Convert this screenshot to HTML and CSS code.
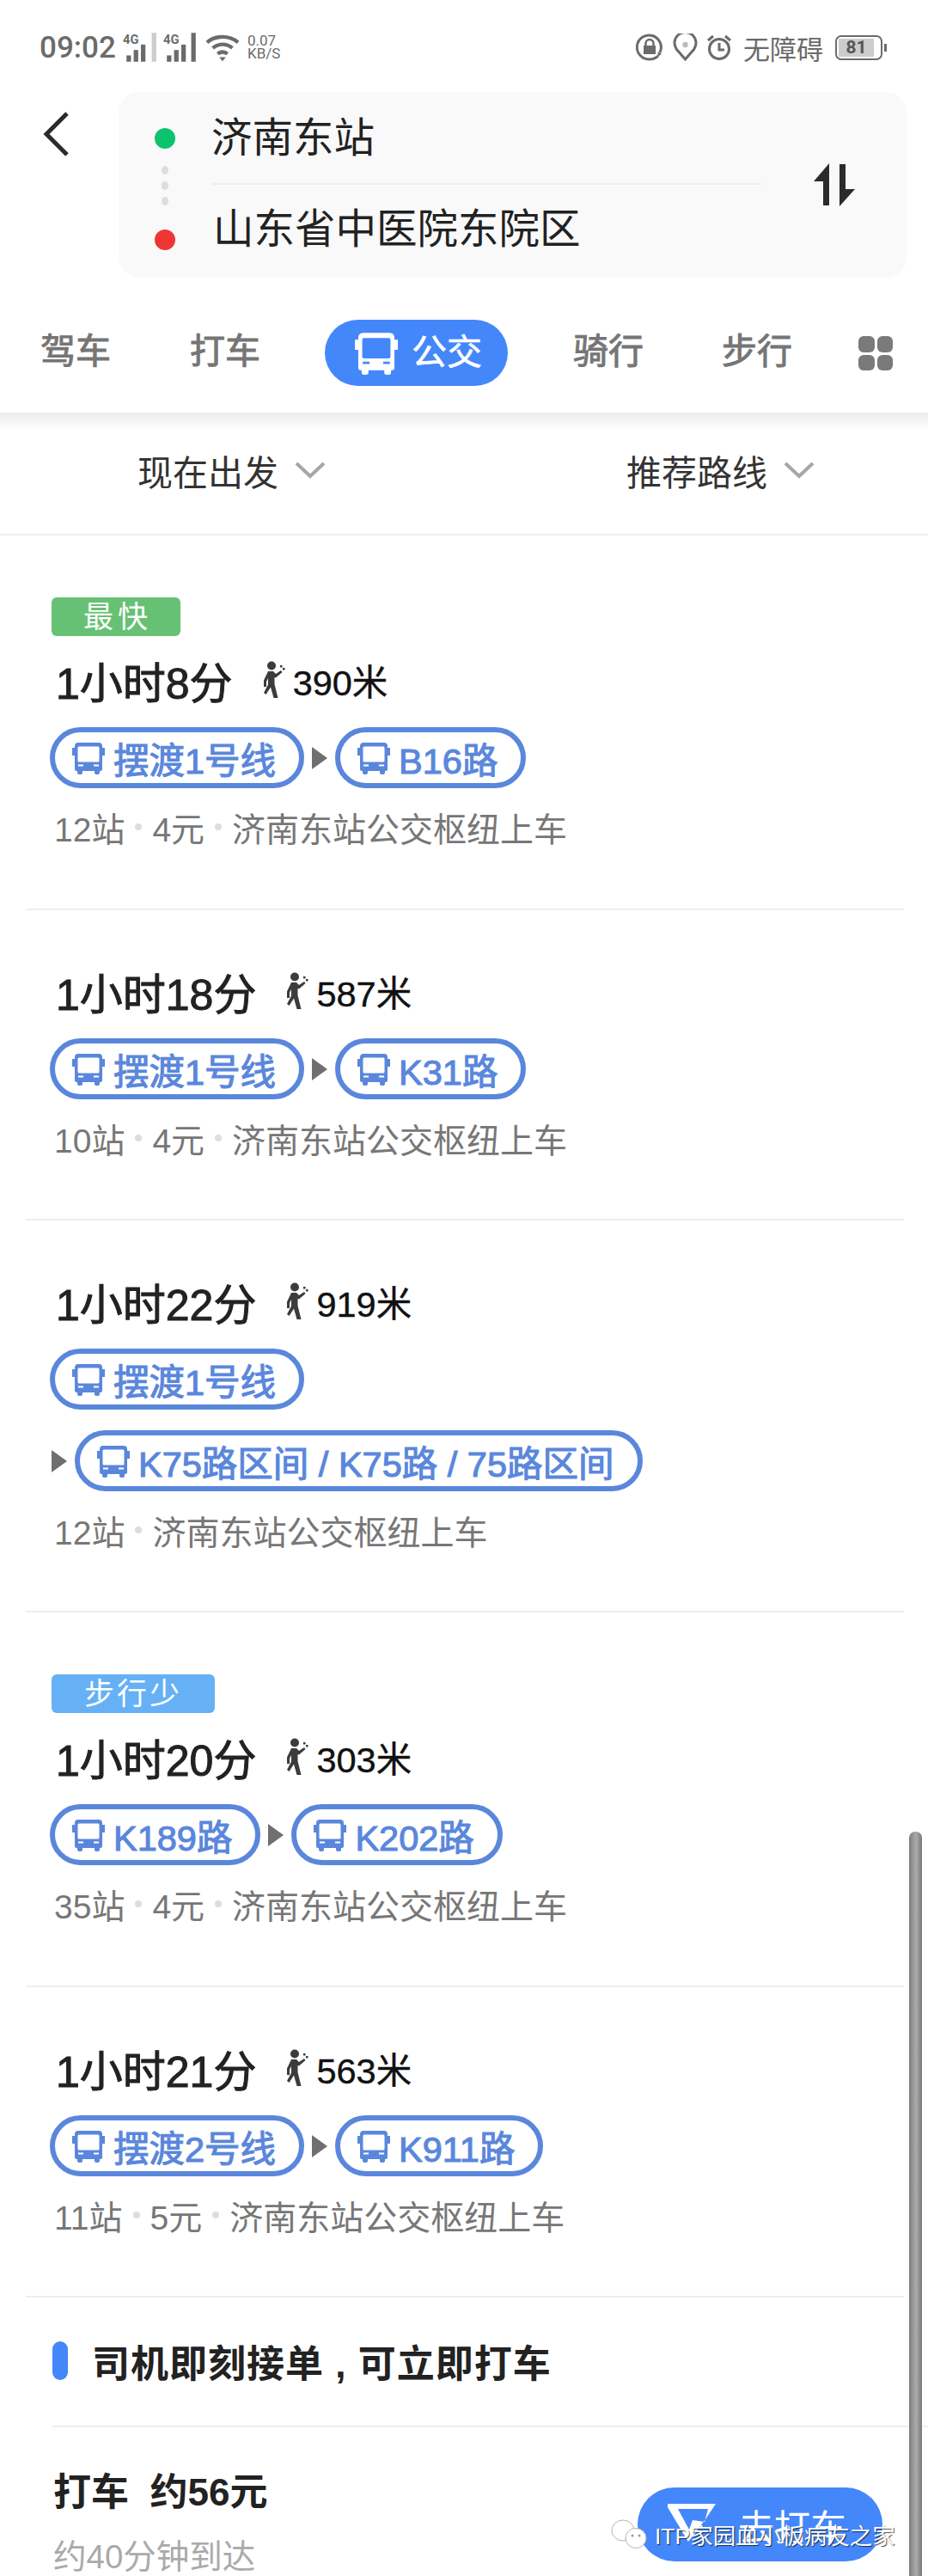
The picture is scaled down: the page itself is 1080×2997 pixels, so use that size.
FILE: index.html
```html
<!DOCTYPE html>
<html lang="zh-CN">
<head>
    <meta charset="UTF-8" />
    <meta name="viewport" content="width=device-width, initial-scale=1.0" />
    <title>公交路线</title>
    <link rel="stylesheet" href="styles.css">
</head>
<body>
    <svg class="sprites" width="0" height="0">
        <symbol id="bus" viewBox="0 0 38 38">
            <path d="M7 1h24a4 4 0 0 1 4 4v2h3v9h-3v16a2 2 0 0 1-2 2h-1v2a2 2 0 0 1-2 2h-2a2 2 0 0 1-2-2v-2H12v2a2 2 0 0 1-2 2H8a2 2 0 0 1-2-2v-2H5a2 2 0 0 1-2-2V16H0V7h3V5a4 4 0 0 1 4-4zm1 4.500a1.500 1.500 0 0 0-1.500 1.500v15a1.500 1.500 0 0 0 1.500 1.500h22a1.500 1.500 0 0 0 1.500-1.500V7a1.500 1.500 0 0 0-1.500-1.500zM7 26.500v2h6v-2zm18 0v2h6v-2z" fill-rule="evenodd" fill="currentColor"/>
        </symbol>
        <symbol id="walk" viewBox="0 0 28 44">
            <circle cx="12" cy="5.500" r="5" fill="currentColor"/>
            <path d="M8 12h6l3 3 6-4 1.500 2-7.500 6.500-1.500-.5v8l4 16h-5l-3.500-12.500-5.500 8.500-2.500-2 5-9.500V20l-2 4v6H3v-7.500z" fill="currentColor"/>
            <rect x="22" y="5" width="2.500" height="2.500" fill="currentColor"/>
            <rect x="25" y="8" width="2.500" height="2.500" fill="currentColor"/>
        </symbol>
    </svg>

    <div class="page">
        <header class="top">
            <div class="status">
                <div class="status-left">
                    <span class="clock">09:02</span>
                    <svg class="signal" viewBox="0 0 40 34"><text x="0" y="13" class="sig-label">4G</text><rect x="4" y="26" width="5" height="7"/><rect x="12" y="20" width="5" height="13"/><rect x="20" y="14" width="5" height="19"/><rect x="32" y="1" width="5" height="32" class="off"/></svg>
                    <svg class="signal" viewBox="0 0 40 34"><text x="0" y="13" class="sig-label">4G</text><rect x="4" y="26" width="5" height="7"/><rect x="12" y="20" width="5" height="13"/><rect x="20" y="14" width="5" height="19"/><rect x="31" y="1" width="5" height="32"/></svg>
                    <svg class="wifi" viewBox="0 0 42 34" fill="none" stroke="#6b6b6b" stroke-width="4.500"><path d="M2 11c11-9 27-9 38 0"/><path d="M9 18c7-6 17-6 24 0"/><path d="M15 25c4-3 8-3 12 0"/><path d="M21 34l-4-5h8z" fill="#6b6b6b" stroke="none"/></svg>
                    <span class="speed">0.07<br>KB/S</span>
                </div>
                <div class="status-right">
                    <svg class="st-icon st-lock" viewBox="0 0 32 32" fill="none" stroke="#6b6b6b" stroke-width="3"><path d="M28 22A14 14 0 1 0 16 30c4 0 7-1 10-4"/><path d="M26 21l4 3-5 3z" fill="#6b6b6b" stroke="none"/><path d="M11.500 15v-3.500a4.500 4.500 0 0 1 9 0V15" stroke-width="2.500"/><rect x="9" y="14" width="14" height="10" fill="#6b6b6b" stroke="none"/></svg>
                    <svg class="st-icon st-pin" viewBox="0 0 29 32" fill="none" stroke="#6b6b6b" stroke-width="3"><path d="M14.500 30L4.500 18.500a12.500 12.500 0 1 1 20 0z"/><circle cx="14.500" cy="13" r="3.200" fill="#bbb" stroke="none"/></svg>
                    <svg class="st-icon st-alarm" viewBox="0 0 30 32" fill="none" stroke="#6b6b6b" stroke-width="3"><circle cx="15" cy="18" r="11.500"/><path d="M15 11v8h6"/><path d="M2 8l6-5M28 8l-6-5"/></svg>
                    <span class="access">无障碍</span>
                    <div class="battery"><div class="battery-body"><span class="battery-fill">81</span></div><i class="battery-tip"></i></div>
                </div>
            </div>

            <div class="search">
                <svg class="back" viewBox="0 0 30 52" fill="none" stroke="#2b2b2b" stroke-width="5"><path d="M28 2L4 26l24 24"/></svg>
                <div class="search-card">
                    <div class="points">
                        <i class="dot start"></i>
                        <i class="tiny"></i><i class="tiny"></i><i class="tiny"></i>
                        <i class="dot end"></i>
                    </div>
                    <div class="places">
                        <div class="place">济南东站</div>
                        <div class="place place-end">山东省中医院东院区</div>
                    </div>
                    <svg class="swap" viewBox="0 0 48 50" fill="#2b2b2b"><path d="M18 0v49h-7V21H0zM30 1h7v29h11L30 50z"/></svg>
                </div>
            </div>

            <nav class="tabs">
                <span class="tab">驾车</span>
                <span class="tab">打车</span>
                <span class="tab-on"><svg class="tab-bus"><use href="#bus"/></svg>公交</span>
                <span class="tab">骑行</span>
                <span class="tab">步行</span>
                <div class="more"><i></i><i></i><i></i><i></i></div>
            </nav>
        </header>

        <div class="filters">
            <span class="filter">现在出发<svg class="chev" viewBox="0 0 36 20" fill="none" stroke="#a6a6a6" stroke-width="4"><path d="M2 2l16 15L34 2"/></svg></span>
            <span class="filter">推荐路线<svg class="chev" viewBox="0 0 36 20" fill="none" stroke="#a6a6a6" stroke-width="4"><path d="M2 2l16 15L34 2"/></svg></span>
        </div>

        <section class="route has-tag">
            <span class="tag tag-green">最快</span>
            <div class="head"><span class="time">1小时8分</span><svg class="walk"><use href="#walk"/></svg><span class="dist">390米</span></div>
            <div class="lines">
                <span class="chip"><svg class="chip-bus"><use href="#bus"/></svg>摆渡1号线</span><i class="arrow"></i><span class="chip"><svg class="chip-bus"><use href="#bus"/></svg>B16路</span>
            </div>
            <div class="meta">12站<i></i>4元<i></i>济南东站公交枢纽上车</div>
        </section>

        <section class="route">
            <div class="head"><span class="time">1小时18分</span><svg class="walk"><use href="#walk"/></svg><span class="dist">587米</span></div>
            <div class="lines">
                <span class="chip"><svg class="chip-bus"><use href="#bus"/></svg>摆渡1号线</span><i class="arrow"></i><span class="chip"><svg class="chip-bus"><use href="#bus"/></svg>K31路</span>
            </div>
            <div class="meta">10站<i></i>4元<i></i>济南东站公交枢纽上车</div>
        </section>

        <section class="route route-tall">
            <div class="head"><span class="time">1小时22分</span><svg class="walk"><use href="#walk"/></svg><span class="dist">919米</span></div>
            <div class="lines">
                <span class="chip"><svg class="chip-bus"><use href="#bus"/></svg>摆渡1号线</span>
            </div>
            <div class="lines second">
                <i class="arrow"></i><span class="chip"><svg class="chip-bus"><use href="#bus"/></svg>K75路区间 / K75路 / 75路区间</span>
            </div>
            <div class="meta">12站<i></i>济南东站公交枢纽上车</div>
        </section>

        <section class="route has-tag">
            <span class="tag tag-blue">步行少</span>
            <div class="head"><span class="time">1小时20分</span><svg class="walk"><use href="#walk"/></svg><span class="dist">303米</span></div>
            <div class="lines">
                <span class="chip"><svg class="chip-bus"><use href="#bus"/></svg>K189路</span><i class="arrow"></i><span class="chip"><svg class="chip-bus"><use href="#bus"/></svg>K202路</span>
            </div>
            <div class="meta">35站<i></i>4元<i></i>济南东站公交枢纽上车</div>
        </section>

        <section class="route">
            <div class="head"><span class="time">1小时21分</span><svg class="walk"><use href="#walk"/></svg><span class="dist">563米</span></div>
            <div class="lines">
                <span class="chip"><svg class="chip-bus"><use href="#bus"/></svg>摆渡2号线</span><i class="arrow"></i><span class="chip"><svg class="chip-bus"><use href="#bus"/></svg>K911路</span>
            </div>
            <div class="meta">11站<i></i>5元<i></i>济南东站公交枢纽上车</div>
        </section>

        <section class="taxi">
            <div class="taxi-title"><i></i>司机即刻接单 , 可立即打车</div>
            <div class="taxi-row">
                <div>
                    <div class="taxi-price">打车&nbsp;&nbsp;约56元</div>
                    <div class="taxi-eta">约40分钟到达</div>
                </div>
                <div class="taxi-btn">
                    <svg class="taxi-icon" viewBox="0 0 56 48" fill="#fff"><path d="M0 0h56L44 18 24 44 0 4zM12 6l13 24 4-11 14 2 4-15z"/></svg>去打车
                </div>
            </div>
        </section>

        <div class="scrollbar"></div>
        <div class="watermark">
            <svg class="wechat" viewBox="0 0 43 37" fill="#fff" stroke="#b5b5b5" stroke-width="1"><ellipse cx="14" cy="14" rx="13" ry="12"/><ellipse cx="29" cy="23" rx="12" ry="11.500"/><circle cx="25" cy="20" r="1.500" fill="#999" stroke="none"/><circle cx="33" cy="20" r="1.500" fill="#999" stroke="none"/></svg>
            <span>ITP家园血小板病友之家</span>
        </div>
    </div>
</body>
</html>
```

FILE: styles.css
```css
* {
    box-sizing: border-box;
}

html, body {
    margin: 0;
    padding: 0;
    background: #fff;
}

body {
    font-family: "Liberation Sans", "Noto Sans CJK SC", sans-serif;
    color: #222;
}

.sprites {
    position: absolute;
}

.page {
    position: relative;
    width: 1080px;
    height: 2997px;
    overflow: hidden;
    background: #fff;
}

i {
    display: block;
}

/* top area */
.top {
    height: 480px;
    background: #fff;
}

.status {
    height: 107px;
    padding: 33px 48px 0 46px;
    display: flex;
    justify-content: space-between;
    align-items: flex-start;
    color: #6b6b6b;
}

.status-left, .status-right {
    display: flex;
    align-items: center;
    height: 44px;
}

.clock {
    font-family: Roboto, sans-serif;
    font-size: 35px;
    font-weight: 500;
    width: 97px;
}

.signal {
    width: 42px;
    height: 36px;
    margin-right: 5px;
    fill: #6b6b6b;
}

.signal .off {
    fill: #ccc;
}

.sig-label {
    font-family: Roboto, sans-serif;
    font-size: 14px;
    font-weight: 700;
}

.wifi {
    width: 40px;
    height: 34px;
    margin: 0 9px 0 2px;
}

.speed {
    font-family: Roboto, sans-serif;
    font-size: 17px;
    line-height: 15px;
}

.st-icon {
    height: 32px;
}

.st-lock {
    width: 32px;
    margin-right: 11px;
}

.st-pin {
    width: 29px;
    margin-right: 10px;
}

.st-alarm {
    width: 30px;
    margin-right: 13px;
}

.access {
    font-size: 31px;
    margin-right: 14px;
}

.battery {
    display: flex;
    align-items: center;
}

.battery-body {
    width: 55px;
    height: 29px;
    border: 2px solid #6b6b6b;
    border-radius: 7px;
    padding: 2px;
}

.battery-fill {
    display: block;
    width: 41px;
    height: 21px;
    background: #ccc;
    color: #555;
    font-family: Roboto, sans-serif;
    font-size: 21px;
    font-weight: 700;
    line-height: 21px;
    text-align: center;
}

.battery-tip {
    width: 3px;
    height: 9px;
    margin-left: 2px;
    background: #6b6b6b;
}

.search {
    display: flex;
    padding-left: 50px;
}

.back {
    width: 30px;
    height: 52px;
    margin: 23px 58px 0 0;
}

.search-card {
    width: 917px;
    height: 216px;
    background: #f9f9f9;
    border-radius: 24px;
    display: flex;
    padding-left: 42px;
}

.points {
    width: 24px;
    padding-top: 42px;
    display: flex;
    flex-direction: column;
    align-items: center;
}

.dot {
    width: 24px;
    height: 24px;
    border-radius: 50%;
}

.start {
    background: #0cc26e;
    margin-bottom: 20px;
}

.end {
    background: #f03535;
    margin-top: 20px;
}

.tiny {
    width: 8px;
    height: 10px;
    border-radius: 50%;
    background: #ddd;
    margin-bottom: 8px;
}

.places {
    width: 640px;
    margin-left: 42px;
}

.place {
    height: 108px;
    font-size: 47.500px;
    line-height: 54px;
    padding-top: 27px;
    color: #222;
    border-bottom: 2px solid #ededed;
}

.place-end {
    border-bottom: 0;
    padding-top: 25px;
    padding-left: 2px;
}

.swap {
    width: 48px;
    height: 50px;
    margin: 83px 0 0 61px;
}

.tabs {
    height: 157px;
    padding: 49px 0 0 47px;
    display: flex;
    align-items: flex-start;
    font-size: 41px;
}

.tab {
    width: 174px;
    height: 77px;
    line-height: 75px;
    color: #757575;
    -webkit-text-stroke: 1px #757575;
}

.tab:nth-of-type(2) {
    width: 157px;
}

.tab:nth-of-type(4) {
    width: 173px;
}

.tab:nth-of-type(5) {
    width: 159px;
}

.tab-on {
    width: 213px;
    height: 77px;
    margin-right: 76px;
    border-radius: 39px;
    background: #4487fb;
    color: #fff;
    display: flex;
    align-items: center;
    padding-left: 35px;
    line-height: 77px;
    -webkit-text-stroke: 0.6px #fff;
}

.tab-bus {
    width: 50px;
    height: 50px;
    margin-right: 16px;
    color: #fff;
}

.more {
    width: 40px;
    height: 40px;
    margin-top: 19px;
    display: grid;
    grid-template-columns: 1fr 1fr;
    gap: 3px;
}

.more i {
    background: #7a7a7a;
    border-radius: 6px;
}

/* filter row */
.filters {
    height: 143px;
    padding: 0 132px 7px 160px;
    display: flex;
    justify-content: space-between;
    align-items: center;
    border-bottom: 2px solid #eee;
    font-size: 41px;
    color: #333;
    background: linear-gradient(#ececec, #fff 20px);
}

.filter {
    display: flex;
    align-items: center;
}

.chev {
    width: 36px;
    height: 20px;
    margin-left: 19px;
}

/* route list */
.route {
    margin: 0 28px 0 30px;
    padding: 70px 0 0 30px;
    height: 361px;
    border-bottom: 2px solid #eee;
}

.route.has-tag {
    height: 436px;
    padding-top: 72px;
}

.route.route-tall {
    height: 456px;
}

.tag {
    display: block;
    width: 150px;
    height: 45px;
    padding-left: 4px;
    border-radius: 6px;
    color: #fff;
    font-size: 35px;
    line-height: 45px;
    text-align: center;
    letter-spacing: 5px;
    margin-bottom: 27px;
}

.tag-green {
    background: #67c174;
}

.tag-blue {
    width: 190px;
    padding-left: 0;
    background: #66b1f5;
    letter-spacing: 3px;
}

.head {
    display: flex;
    align-items: center;
    height: 48px;
    padding-left: 5px;
}

.time {
    font-size: 50px;
    -webkit-text-stroke: 1px #222;
    color: #222;
    margin-right: 33px;
}

.walk {
    width: 28px;
    height: 44px;
    color: #3c3c3c;
    margin-right: 9px;
}

.dist {
    font-size: 41.500px;
    -webkit-text-stroke: 0.4px #111;
    color: #111;
}

.lines {
    display: flex;
    align-items: center;
    margin-top: 31px;
    margin-left: -2px;
}

.lines.second {
    margin-top: 24px;
}

.second .arrow {
    margin-left: 2px;
}

.chip {
    height: 71px;
    display: flex;
    align-items: center;
    border: 6px solid #5a87dc;
    border-radius: 36px;
    padding: 0 27px 0 20px;
    color: #5a87dc;
    font-size: 41.500px;
    -webkit-text-stroke: 1.1px #5a87dc;
}

.chip-bus {
    width: 38px;
    height: 38px;
    margin-right: 10px;
}

.arrow {
    width: 0;
    height: 0;
    margin: 0 9px;
    border-left: 18px solid #6f6f6f;
    border-top: 13px solid transparent;
    border-bottom: 13px solid transparent;
}

.meta {
    display: flex;
    align-items: center;
    height: 48px;
    margin-top: 21px;
    padding-left: 3px;
    font-size: 39px;
    color: #777;
}

.meta i {
    width: 8px;
    height: 8px;
    border-radius: 50%;
    background: #ddd;
    margin: 0 12px;
}

/* taxi */
.taxi-title {
    height: 151px;
    margin-left: 61px;
    border-bottom: 2px solid #eee;
    display: flex;
    align-items: center;
    font-size: 44px;
    font-weight: 700;
    letter-spacing: 1px;
    white-space: pre;
    color: #222;
    padding-bottom: 2px;
}

.taxi-title i {
    width: 18px;
    height: 45px;
    border-radius: 9px;
    background: #4487fb;
    margin-right: 28px;
}

.taxi-row {
    display: flex;
    justify-content: space-between;
    padding: 50px 53px 0 62px;
}

.taxi-price {
    font-size: 44px;
    font-weight: 700;
    line-height: 52px;
    color: #222;
}

.taxi-eta {
    font-size: 38.500px;
    line-height: 50px;
    margin-top: 24px;
    color: #aaa;
}

.taxi-btn {
    width: 285px;
    height: 86px;
    margin-top: 20px;
    border-radius: 43px;
    background: #4487fb;
    color: #fff;
    font-size: 42px;
    display: flex;
    align-items: center;
    padding-left: 35px;
}

.taxi-icon {
    width: 56px;
    height: 48px;
    margin-right: 26px;
}

/* over the content */
.scrollbar {
    position: absolute;
    left: 1058px;
    top: 2131px;
    width: 15px;
    height: 900px;
    border-radius: 7px;
    background: linear-gradient(90deg, #7d7d7d, #ababab 55%, #777);
}

.watermark {
    position: absolute;
    left: 711px;
    top: 2929px;
    display: flex;
    align-items: center;
    color: #fff;
    font-size: 26.500px;
    text-shadow: 1px 1px 1px rgba(0, 0, 0, 0.7);
}

.wechat {
    width: 43px;
    height: 37px;
    margin-right: 8px;
}
```
